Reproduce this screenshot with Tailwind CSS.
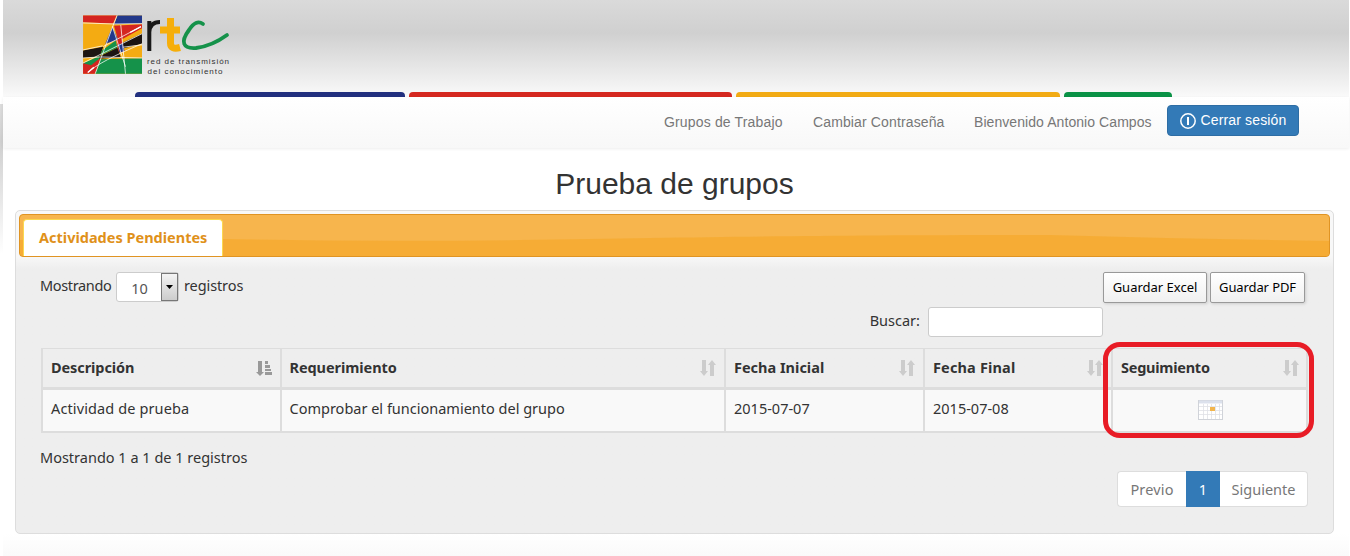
<!DOCTYPE html>
<html lang="es">
<head>
<meta charset="utf-8">
<title>Prueba de grupos</title>
<script src="https://cdn.jsdelivr.net/npm/@tailwindcss/browser@4"></script>
</head>
<body class="bg-white w-[1350px] h-[556px] overflow-hidden flex font-['Noto_Sans',sans-serif] text-[#333]">
  <div class="w-[3px] shrink-0 pt-[104px]"><div class="h-[150px] bg-linear-to-b from-[#dcdcdc] via-[#cfcfcf] via-25% to-white"></div></div>
  <div class="w-[1346px] mr-px flex flex-col bg-linear-to-b from-white from-96% to-[#fafafa]">
    <header class="h-[97px] flex flex-col justify-between bg-linear-to-b from-[#dadada] via-[#d0d0d0] via-34% to-[#fafafa]">
      <svg class="ml-[77px] mt-[10px] w-[160px] h-[70px]" viewBox="80 10 160 70">
        <g transform="translate(79.700 11.500) scale(.3367)">
          <rect x="10" y="12" width="175" height="173" fill="#f4ab12"/>
          <path d="M10 12H110L99 36L10 32Z" fill="#d42420"/>
          <path d="M112 12H185V36L102 38Z" fill="#22388a"/>
          <path d="M102 42L185 38V50L115 88Z" fill="#d42420"/>
          <path d="M97 46L76 96L114 84Z" fill="#22388a"/>
          <path d="M108 102L185 65V96L128 110Z" fill="#1c1512"/>
          <path d="M10 116L70 105L60 134L10 138Z" fill="#1c1512"/>
          <path d="M66 116L107 86L112 108L62 130Z" fill="#15924a"/>
          <path d="M109 86L124 80L133 118L116 122Z" fill="#d42420"/>
          <path d="M114 98L128 94L133 118L118 122Z" fill="#22388a"/>
          <path d="M58 134L112 108L122 136L56 140Z" fill="#1c1512"/>
          <path d="M10 154L62 140L46 185H10Z" fill="#d42420"/>
          <path d="M10 154L60 132L56 142L34 160Z" fill="#15924a"/>
          <path d="M62 142L185 139V185H46Z" fill="#15924a"/>
          <g stroke="#fff" stroke-width="2.200" fill="none"><path d="M10 34L100 37L185 36M111 12L99 42L46 185M97 44L136 164M122 40L136 185M10 153L185 66M24 181Q60 148 185 96M70 104L182 45M128 106L185 99M10 114L68 102M10 138L62 135L185 138"/><path d="M150 62L182 45M24 181L42 166" stroke-width="4"/></g>
        </g>
        <path d="M149.300 51V21M149.300 32Q150 22 160 22" fill="none" stroke="#191919" stroke-width="4"/>
        <path d="M170.500 18V43Q170.500 50 180 47.500M160 30H180" fill="none" stroke="#f6ae0a" stroke-width="7"/>
        <path d="M203 24Q196 19 189 30C180 42 183 49 196 48Q212 46 227 35" fill="none" stroke="#15924a" stroke-width="3.800" stroke-linecap="round"/>
        <g fill="#333" font-family="Liberation Sans, sans-serif" font-size="8"><text x="147" y="63.500" textLength="82">red de transmisión</text><text x="147.500" y="73.500" textLength="75">del conocimiento</text></g>
      </svg>
      <div class="flex gap-1 ml-[132px] h-[5px]">
        <div class="w-[270px] rounded-t-[4px] bg-[#22307f]"></div><div class="w-[323px] rounded-t-[4px] bg-[#d52820]"></div><div class="w-[324px] rounded-t-[4px] bg-[#f2ab14]"></div><div class="w-[108px] rounded-t-[4px] bg-[#0a9246]"></div>
      </div>
    </header>
    <nav class="h-[51px] shrink-0 flex justify-end pr-[50px] pt-2 bg-linear-to-b from-white to-[#f8f8f8] shadow-[0_1px_3px_#00000012] font-['Liberation_Sans',Arial,sans-serif] text-sm text-[#777]">
      <div class="flex pt-[7px]"><a class="w-[149px] tracking-[0.16px]">Grupos de Trabajo</a><a class="w-[161px] tracking-[0.13px]">Cambiar Contraseña</a><a class="w-[178px] tracking-[0.07px] whitespace-nowrap">Bienvenido Antonio Campos</a></div>
      <button class="ml-[15px] w-[132px] h-[31px] rounded bg-[#337ab7] border border-[#2e6da4] text-white flex items-center justify-center gap-[5px]">
        <svg class="size-4 mt-px" viewBox="0 0 16 16" fill="none" stroke="#fff" stroke-width="1.500"><circle cx="8" cy="8" r="7.200"/><path d="M8 4V12" stroke-width="2"/></svg><span class="-mt-px tracking-[0.15px]">Cerrar sesión</span></button>
    </nav>
    <h1 class="text-center mt-[17px] pr-[3px] h-[45px] leading-[38px] text-[30px] font-['Liberation_Sans',Arial,sans-serif]">Prueba de grupos</h1>
    <main class="ml-3 w-[1319px] h-[324px] shrink-0 border border-[#ddd] rounded-[5px] bg-linear-to-b from-[#f8f8f8] from-14% to-[#eee] to-18% p-[3px]">
      <div class="relative h-[43px] rounded border border-[#e09423] overflow-hidden bg-[#f7b54d]">
        <svg class="absolute inset-0 w-full h-full" viewBox="0 0 1309 41" preserveAspectRatio="none"><path d="M0 25Q100 20 203 24Q350 27 500 25C700 22 800 20 1030 20Q1170 24 1309 26V41H0Z" fill="#f6a92e" opacity=".75"/></svg>
        <div class="relative mt-1 ml-[3px] w-[200px] h-[38px] bg-white border border-b-0 border-[#fbd850] rounded-t-[4px] pl-[15px] leading-[35px] text-[14.500px] font-bold text-[#e0911a]">Actividades Pendientes</div>
      </div>
      <div class="px-[21px] pt-[15px]">
        <div class="flex h-[31px]">
          <div class="flex text-[14.500px] leading-[27px]"><span class="w-[76px] tracking-[-0.35px]">Mostrando</span>
            <div class="w-[63px] h-[30px] bg-white border border-[#ccc] rounded-[3px] flex text-[#555] mr-[5px]"><span class="w-[44px] text-center leading-[31px] pl-px">10</span><span class="w-[17px] border border-[#777] bg-linear-to-b from-[#f4f4f4] to-[#ccc] flex items-center justify-center"><svg class="w-[7px] h-[4px]" viewBox="0 0 7 4"><path d="M0 0H7L3.500 4Z"/></svg></span></div><span class="tracking-[-0.1px]">registros</span></div>
          <div class="ml-auto flex gap-[3px] text-[13px] text-black pr-[4px]"><button class="w-[104px] h-[31px] border border-[#999] rounded-[2px] bg-linear-to-b from-white to-[#f0f0f0] shadow-[1px_1px_3px_#ccc]">Guardar Excel</button><button class="w-[95px] h-[31px] border border-[#999] rounded-[2px] bg-linear-to-b from-white to-[#f0f0f0] shadow-[1px_1px_3px_#ccc] tracking-[-0.1px]">Guardar PDF</button></div>
        </div>
        <div class="flex justify-end mt-[4px] pr-[206px] text-[14.500px] leading-[27px]"><span class="mr-2">Buscar:</span><input class="w-[175px] h-[30px] bg-white border border-[#ccc] rounded-[3px]"></div>
        <div class="relative ml-[1px] mt-[11px] w-[1267px] h-[85px] border-2 border-t border-[#ddd] grid grid-cols-[239px_444px_199px_188px_1fr] grid-rows-[41px_1fr] text-[14.500px]">
          <div class="border-r-2 border-b-3 border-[#ddd] font-bold pl-2 pr-2 flex items-center justify-between"><span class="tracking-[-0.08px]">Descripción</span><svg class="w-4 h-4" viewBox="0 0 16 16" fill="#999"><path d="M2 1H6V12H8L4 16L0 12H2ZM9 1H12V4H9ZM9 5H14V8H9ZM9 9H15V11H9ZM9 12H16V15H9Z"/></svg></div>
          <div class="border-r-2 border-b-3 border-[#ddd] font-bold pl-[7.500px] pr-2 flex items-center justify-between"><span class="tracking-[-0.07px]">Requerimiento</span><svg class="w-4 h-4" viewBox="0 0 16 16" fill="#ccc"><path d="M2 0H6V11H8L4 16L0 11H2ZM10 16H14V5H16L12 0L8 5H10Z"/></svg></div>
          <div class="border-r-2 border-b-3 border-[#ddd] font-bold px-2 flex items-center justify-between">Fecha Inicial<svg class="w-4 h-4" viewBox="0 0 16 16" fill="#ccc"><path d="M2 0H6V11H8L4 16L0 11H2ZM10 16H14V5H16L12 0L8 5H10Z"/></svg></div>
          <div class="border-r-2 border-b-3 border-[#ddd] font-bold px-2 flex items-center justify-between"><span class="tracking-[0.15px]">Fecha Final</span><svg class="w-4 h-4" viewBox="0 0 16 16" fill="#ccc"><path d="M2 0H6V11H8L4 16L0 11H2ZM10 16H14V5H16L12 0L8 5H10Z"/></svg></div>
          <div class="border-b-3 border-[#ddd] font-bold pl-2 pr-[7px] flex items-center justify-between"><span class="tracking-[-0.25px]">Seguimiento</span><svg class="w-4 h-4" viewBox="0 0 16 16" fill="#ccc"><path d="M2 0H6V11H8L4 16L0 11H2ZM10 16H14V5H16L12 0L8 5H10Z"/></svg></div>
          <div class="border-r-2 border-[#ddd] bg-[#f9f9f9] px-2 pb-1 flex items-center tracking-[0.12px]">Actividad de prueba</div>
          <div class="border-r-2 border-[#ddd] bg-[#f9f9f9] pl-[7.500px] pb-1 flex items-center">Comprobar el funcionamiento del grupo</div>
          <div class="border-r-2 border-[#ddd] bg-[#f9f9f9] px-2 pb-1 flex items-center">2015-07-07</div>
          <div class="border-r-2 border-[#ddd] bg-[#f9f9f9] px-2 pb-1 flex items-center">2015-07-08</div>
          <div class="bg-[#f9f9f9] flex items-center justify-center pb-[2px] pl-px"><svg class="w-[25px] h-[20px]" viewBox="0 0 25 20"><rect x=".5" y=".5" width="24" height="19" fill="#fff" stroke="#d0d3d9"/><path d="M1 2H24" stroke="#dce1ec" stroke-width="3"/><path d="M1 6.500H24M1 10.500H24M1 14.500H24M5.500 4V19M9.500 4V19M13.500 4V19M17.500 4V19M21.500 4V19" stroke="#dfe1e6" stroke-width=".8"/><rect x="12" y="7" width="5" height="4" fill="#f2b54d"/></svg></div>
          <div class="absolute left-[1060px] top-[-7px] w-[211px] h-[96px] border-5 border-[#e81c26] rounded-[17px]"></div>
        </div>
        <div class="text-[14.500px] leading-5 mt-[14px]">Mostrando 1 a 1 de 1 registros</div>
        <div class="flex justify-end mt-[4px] pr-px text-[14.500px] text-[#777] leading-[34px] text-center"><span class="w-[69px] bg-white border border-r-0 border-[#ddd] rounded-l tracking-[0.15px]">Previo</span><span class="w-[34px] bg-[#337ab7] border border-[#337ab7] text-white">1</span><span class="w-[88px] bg-white border border-l-0 border-[#ddd] rounded-r">Siguiente</span></div>
      </div>
    </main>
  </div>
</body>
</html>
